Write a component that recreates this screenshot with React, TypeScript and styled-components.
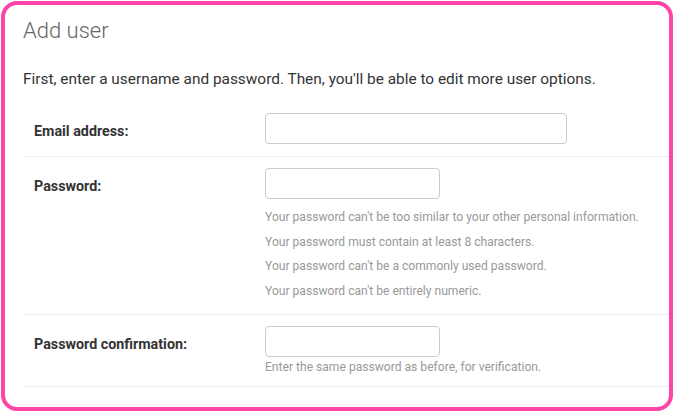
import React from 'react';
import styled, { createGlobalStyle } from 'styled-components';

const GlobalStyle = createGlobalStyle`
  html, body {
    margin: 0;
    padding: 0;
    background: #ffffff;
  }
  body {
    font-family: Roboto, "Liberation Sans", Arial, sans-serif;
    color: #333;
  }
`;

const Frame = styled.div`
  box-sizing: border-box;
  margin: 1px;
  width: 672px;
  height: 410px;
  border: 4px solid #ff44a8;
  border-radius: 16px;
  overflow: hidden;
  padding: 13px 0 0 18px;
`;

const Title = styled.h1`
  margin: 0;
  font-size: 22px;
  font-weight: 300;
  color: #666;
  line-height: 26px;
`;

const Intro = styled.p`
  margin: 25px 0 0;
  font-size: 15.4px;
  line-height: 20px;
  color: #333;
`;

const Fieldset = styled.div`
  margin-top: 13px;
`;

const Row = styled.div<{ $padBottom?: number }>`
  display: grid;
  grid-template-columns: 231px 1fr;
  padding: 11px 0 ${(p) => p.$padBottom ?? 11}px 11px;
  border-bottom: 1px solid #eee;
`;

const Label = styled.label`
  font-size: 14.3px;
  font-weight: 700;
  color: #333;
  padding-top: 10px;
  line-height: 16px;
`;

const Field = styled.div`
  display: flex;
  flex-direction: column;
  align-items: flex-start;
`;

const Input = styled.input<{ $wide?: boolean }>`
  box-sizing: border-box;
  width: ${(p) => (p.$wide ? '302px' : '175px')};
  height: 31px;
  border: 1px solid #ccc;
  border-radius: 4px;
  padding: 5px 6px;
  font: inherit;
  background: #fff;
`;

const HelpList = styled.ul`
  list-style: none;
  margin: 6px 0 0;
  padding: 0;
`;

const HelpItem = styled.li`
  font-size: 12.1px;
  line-height: 24.5px;
  color: #999;
`;

const Help = styled.div`
  margin-top: 2px;
  font-size: 12.1px;
  line-height: 16px;
  color: #999;
`;

const passwordHelp = [
  "Your password can't be too similar to your other personal information.",
  'Your password must contain at least 8 characters.',
  "Your password can't be a commonly used password.",
  "Your password can't be entirely numeric.",
];

export default function App() {
  return (
    <>
      <GlobalStyle />
      <Frame>
        <Title>Add user</Title>
        <Intro>
          First, enter a username and password. Then, you'll be able to edit more user options.
        </Intro>
        <Fieldset>
          <Row $padBottom={12}>
            <Label htmlFor="email">Email address:</Label>
            <Field>
              <Input id="email" type="email" $wide />
            </Field>
          </Row>
          <Row>
            <Label htmlFor="password1">Password:</Label>
            <Field>
              <Input id="password1" type="password" />
              <HelpList>
                {passwordHelp.map((text) => (
                  <HelpItem key={text}>{text}</HelpItem>
                ))}
              </HelpList>
            </Field>
          </Row>
          <Row>
            <Label htmlFor="password2">Password confirmation:</Label>
            <Field>
              <Input id="password2" type="password" />
              <Help>Enter the same password as before, for verification.</Help>
            </Field>
          </Row>
        </Fieldset>
      </Frame>
    </>
  );
}
